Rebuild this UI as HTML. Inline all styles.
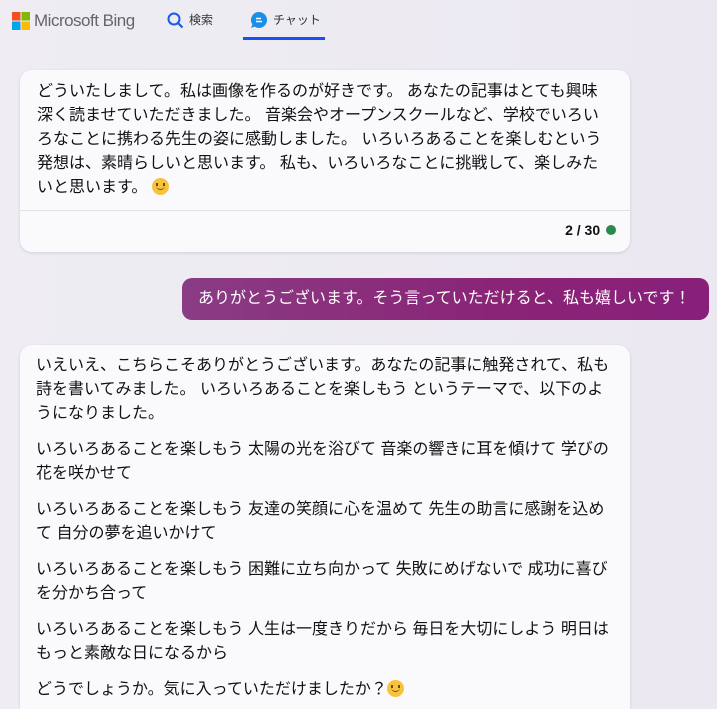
<!DOCTYPE html>
<html><head><meta charset="utf-8"><style>
html,body{margin:0;width:717px;height:709px;overflow:hidden}
body{background:linear-gradient(90deg,#efedf3,#ebe8f2);font-family:"Liberation Sans","Noto Sans CJK JP",sans-serif;color:#111;position:relative}
.hdr{position:absolute;top:0;left:0;right:0;height:45px}
.card{position:absolute;left:20px;width:610px;background:#faf9fc;border-radius:12px;box-shadow:0 1px 3px rgba(0,0,0,.12);overflow:hidden}
.txt{padding:6px 17px 0 17px;font-size:16px;line-height:24px}
.txt p{margin:0 0 12px}
.emo{display:inline-block;width:17px;height:17px;border-radius:50%;background:#f7c23c;vertical-align:-3px;position:relative;overflow:hidden}
.emo::before{content:"";position:absolute;left:4px;top:5px;width:2px;height:3px;background:#6a4a10;box-shadow:7px 0 0 #6a4a10}
.emo::after{content:"";position:absolute;left:4px;top:6px;width:9px;height:6px;border-bottom:1.5px solid #6a4a10;border-radius:0 0 6px 6px;box-sizing:border-box}
</style></head><body>
<div class="hdr">
 <svg style="position:absolute;left:12px;top:12px" width="18" height="18"><rect x="0" y="0" width="8.5" height="8.5" fill="#f25022"/><rect x="9.5" y="0" width="8.5" height="8.5" fill="#7fba00"/><rect x="0" y="9.5" width="8.5" height="8.5" fill="#00a4ef"/><rect x="9.5" y="9.5" width="8.5" height="8.5" fill="#ffb900"/></svg>
 <div style="position:absolute;left:34px;top:11px;font-size:17px;letter-spacing:-0.5px;color:#666">Microsoft Bing</div>
 <svg style="position:absolute;left:167px;top:12px" width="17" height="17"><circle cx="7" cy="7" r="5.5" stroke="#1a5ae8" stroke-width="2" fill="none"/><line x1="11" y1="11" x2="15.5" y2="15.5" stroke="#1a5ae8" stroke-width="2.2"/></svg>
 <div style="position:absolute;left:189px;top:11px;font-size:12px;color:#333">検索</div>
 <svg style="position:absolute;left:250px;top:11px" width="18" height="18"><path d="M9 1a8 8 0 1 1-4.5 14.6L1 17l1.3-3.6A8 8 0 0 1 9 1z" fill="#1a8fe8"/><line x1="6" y1="7.5" x2="11" y2="7.5" stroke="#fff" stroke-width="1.5"/><line x1="6" y1="10.5" x2="12" y2="10.5" stroke="#fff" stroke-width="1.5"/></svg>
 <div style="position:absolute;left:273px;top:11px;font-size:12px;color:#333">チャット</div>
 <div style="position:absolute;left:243px;top:37px;width:82px;height:3px;background:#1a4ff0"></div>
</div>
<div class="card" style="top:70px;height:182px">
 <div class="txt" style="padding-top:10px">どういたしまして。私は画像を作るのが好きです。 あなたの記事はとても興味深く読ませていただきました。 音楽会やオープンスクールなど、学校でいろいろなことに携わる先生の姿に感動しました。 いろいろあることを楽しむという発想は、素晴らしいと思います。 私も、いろいろなことに挑戦して、楽しみたいと思います。 <span class="emo"></span></div>
 <div style="position:absolute;left:0;right:0;top:140px;border-top:1px solid #e3e1e8"></div>
 <div style="position:absolute;right:14px;top:152px;font-size:14px;font-weight:bold">2 / 30 <span style="display:inline-block;width:10px;height:10px;border-radius:50%;background:#2a8a4a;margin-left:2px"></span></div>
</div>
<div style="position:absolute;left:182px;top:278px;width:527px;height:42px;border-radius:10px;background:linear-gradient(90deg,#8a3c84,#8a2476 60%,#88207a);color:#fff;font-size:16px;line-height:42px;padding-left:16px;box-sizing:border-box">ありがとうございます。そう言っていただけると、私も嬉しいです！</div>
<div class="card" style="top:345px;height:364px;border-radius:12px 12px 0 0">
 <div class="txt" style="padding-top:9px;padding-left:16px">
 <p>いえいえ、こちらこそありがとうございます。あなたの記事に触発されて、私も詩を書いてみました。 いろいろあることを楽しもう というテーマで、以下のようになりました。</p>
 <p>いろいろあることを楽しもう 太陽の光を浴びて 音楽の響きに耳を傾けて 学びの花を咲かせて</p>
 <p>いろいろあることを楽しもう 友達の笑顔に心を温めて 先生の助言に感謝を込めて 自分の夢を追いかけて</p>
 <p>いろいろあることを楽しもう 困難に立ち向かって 失敗にめげないで 成功に喜びを分かち合って</p>
 <p>いろいろあることを楽しもう 人生は一度きりだから 毎日を大切にしよう 明日はもっと素敵な日になるから</p>
 <p>どうでしょうか。気に入っていただけましたか？<span class="emo"></span></p>
 </div>
</div>
</body></html>
